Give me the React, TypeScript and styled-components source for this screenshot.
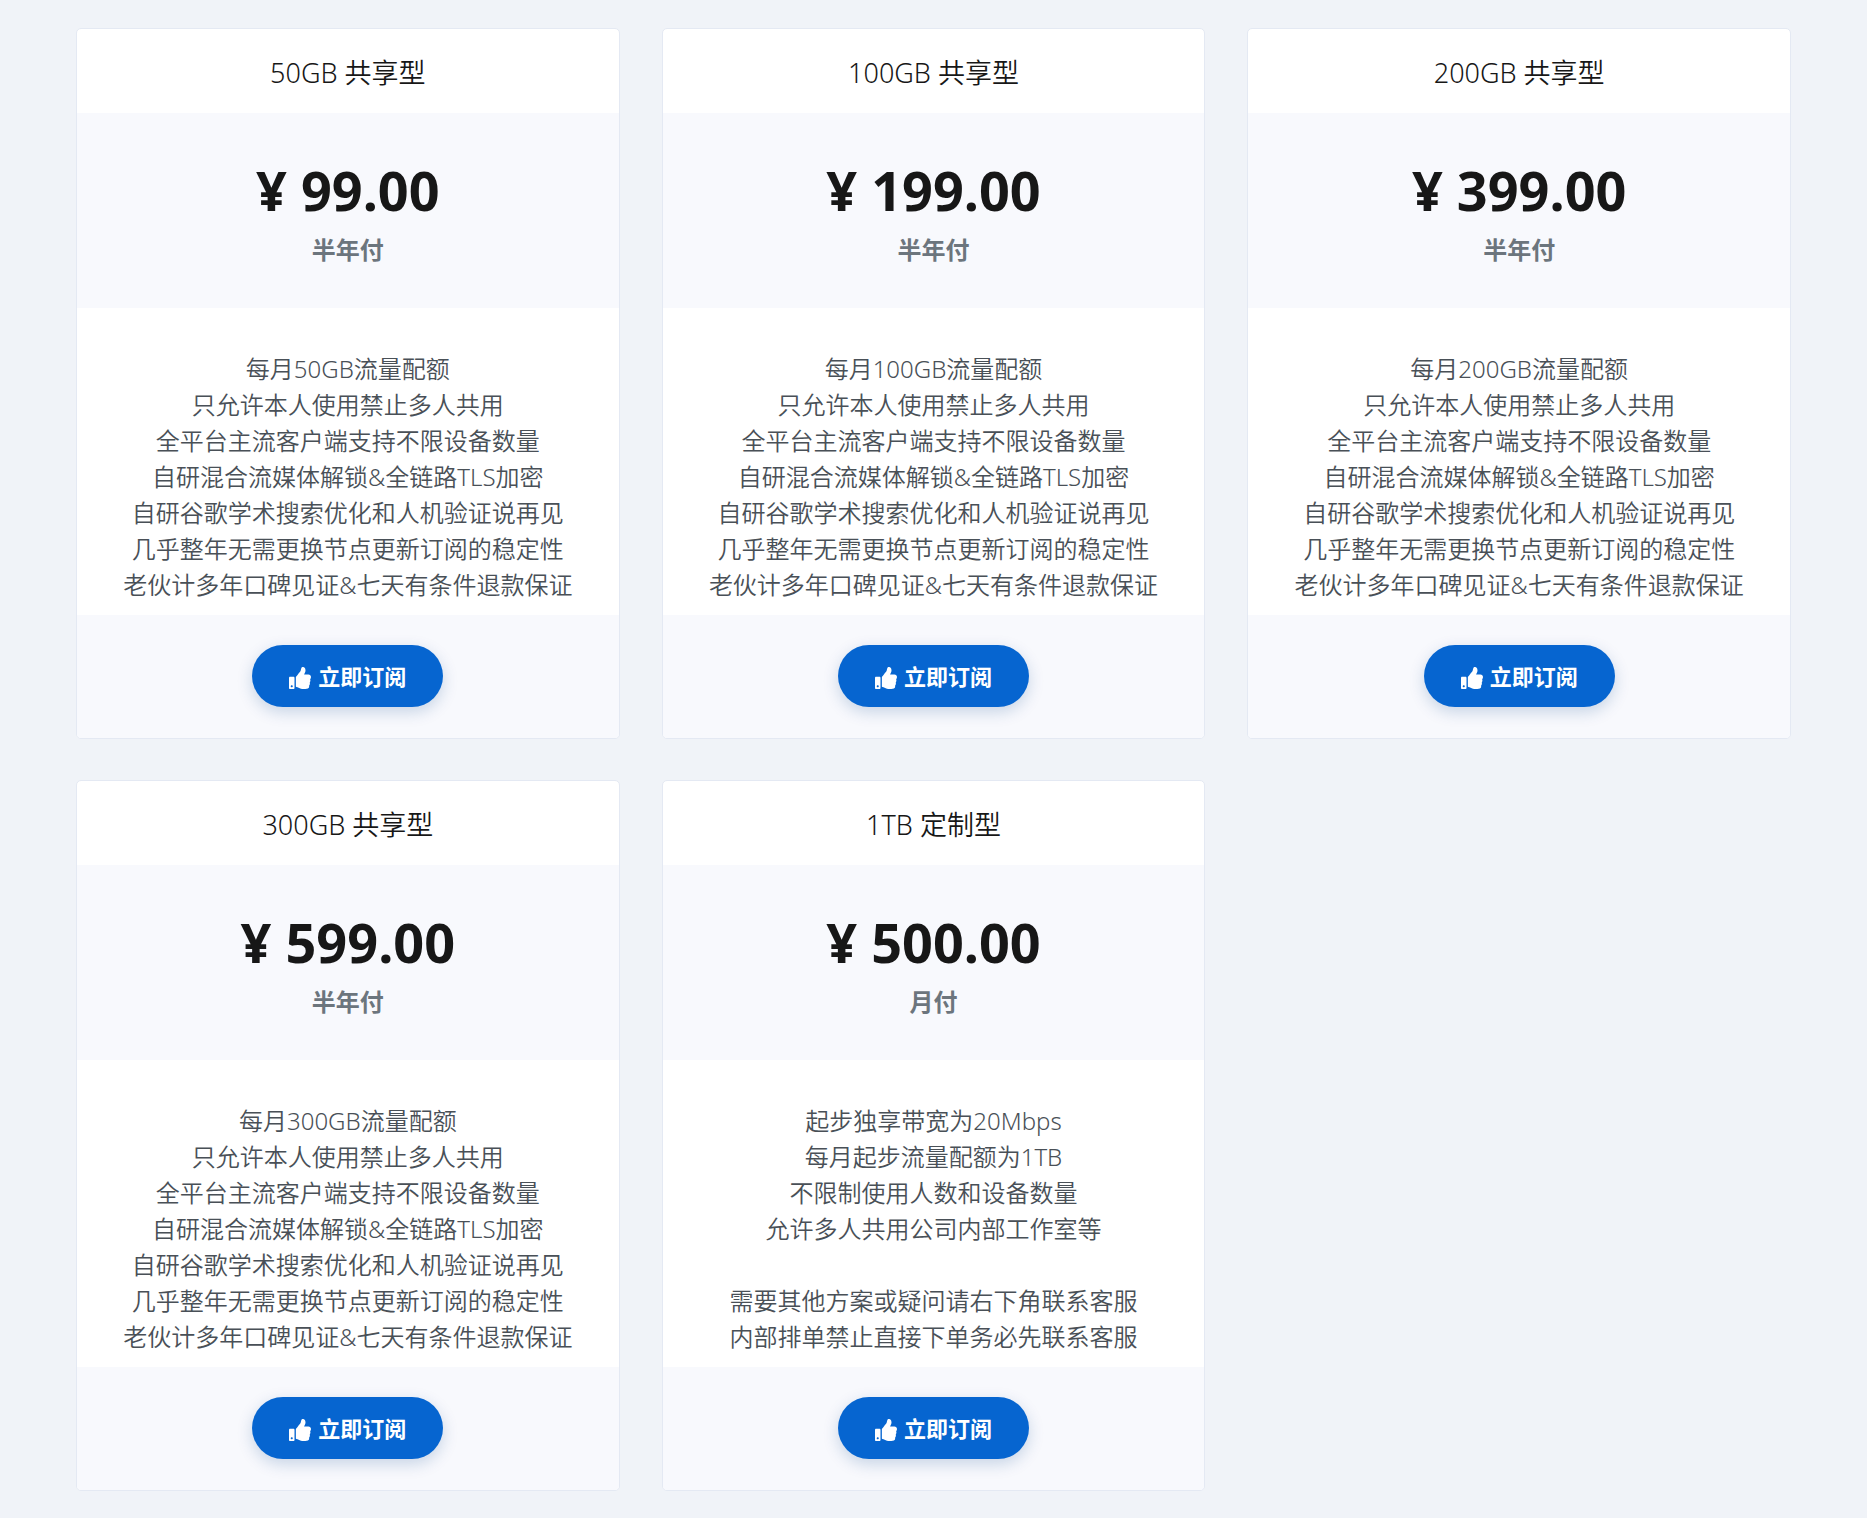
import React from 'react';
import styled, { createGlobalStyle } from 'styled-components';
import { FaThumbsUp } from 'react-icons/fa';

const GlobalStyle = createGlobalStyle`
  *, *::before, *::after {
    box-sizing: border-box;
  }
  body {
    margin: 0;
    background: #f0f3f8;
    color: #171717;
    font-family: "Noto Sans", "Noto Sans CJK SC", sans-serif;
  }
`;

const Page = styled.main`
  padding: 28px 76px;
`;

const Grid = styled.div`
  display: grid;
  grid-template-columns: repeat(3, minmax(0, 1fr));
  gap: 41px 42px;

  @media (max-width: 1300px) {
    grid-template-columns: minmax(0, 1fr);
  }
`;

const Card = styled.article`
  display: flex;
  flex-direction: column;
  overflow: hidden;
  text-align: center;
  background: #fff;
  border: 1px solid #e4e9f3;
  border-radius: 5px;
`;

const Title = styled.h3`
  margin: 0;
  padding: 24px 20px 20px;
  font-size: 27px;
  font-weight: 350;
  line-height: 40px;
`;

const PriceBlock = styled.div`
  padding: 44px 20px 40px;
  background: #f8f9fd;
`;

const Price = styled.p`
  margin: 0;
  font-size: 54px;
  font-weight: 700;
  line-height: 66px;
`;

const Period = styled.p`
  margin: 8px 0 0;
  color: #6c757d;
  font-size: 24px;
  font-weight: 700;
  line-height: 37px;
`;

const Features = styled.p`
  flex: 1;
  margin: 0;
  padding: 43px 20px 12px;
  color: #495057;
  font-size: 24px;
  font-weight: 350;
  line-height: 36px;
  white-space: pre-line;
`;

const Footer = styled.footer`
  display: flex;
  justify-content: center;
  padding: 30px 20px 31px;
  background: #f8f9fd;
`;

const SubscribeButton = styled.button`
  display: inline-flex;
  align-items: center;
  gap: 7px;
  height: 62px;
  padding: 0 37px;
  border: 0;
  border-radius: 31px;
  background: #0665d0;
  color: #fff;
  font: inherit;
  font-size: 22px;
  font-weight: 700;
  line-height: 32px;
  white-space: nowrap;
  box-shadow: 0 5px 16px rgba(4, 67, 137, 0.2);
  cursor: pointer;

  &:hover {
    background: #0559b7;
  }

  svg {
    margin-top: 3px;
  }
`;

interface Plan {
  name: string;
  price: string;
  period: string;
  features: string[];
}

const sharedPlan = (quota: string, price: string): Plan => ({
  name: `${quota} 共享型`,
  price,
  period: '半年付',
  features: [
    `每月${quota}流量配额`,
    '只允许本人使用禁止多人共用',
    '全平台主流客户端支持不限设备数量',
    '自研混合流媒体解锁&全链路TLS加密',
    '自研谷歌学术搜索优化和人机验证说再见',
    '几乎整年无需更换节点更新订阅的稳定性',
    '老伙计多年口碑见证&七天有条件退款保证',
  ],
});

const plans: Plan[] = [
  sharedPlan('50GB', '99.00'),
  sharedPlan('100GB', '199.00'),
  sharedPlan('200GB', '399.00'),
  sharedPlan('300GB', '599.00'),
  {
    name: '1TB 定制型',
    price: '500.00',
    period: '月付',
    features: [
      '起步独享带宽为20Mbps',
      '每月起步流量配额为1TB',
      '不限制使用人数和设备数量',
      '允许多人共用公司内部工作室等',
      '',
      '需要其他方案或疑问请右下角联系客服',
      '内部排单禁止直接下单务必先联系客服',
    ],
  },
];

function PlanCard({ plan }: { plan: Plan }) {
  return (
    <Card>
      <Title>{plan.name}</Title>
      <PriceBlock>
        <Price>¥ {plan.price}</Price>
        <Period>{plan.period}</Period>
      </PriceBlock>
      <Features>{plan.features.join('\n')}</Features>
      <Footer>
        <SubscribeButton type="button">
          <FaThumbsUp size={22} aria-hidden="true" />
          立即订阅
        </SubscribeButton>
      </Footer>
    </Card>
  );
}

export default function App() {
  return (
    <>
      <GlobalStyle />
      <Page lang="zh-CN">
        <Grid>
          {plans.map((plan) => (
            <PlanCard key={plan.name} plan={plan} />
          ))}
        </Grid>
      </Page>
    </>
  );
}
